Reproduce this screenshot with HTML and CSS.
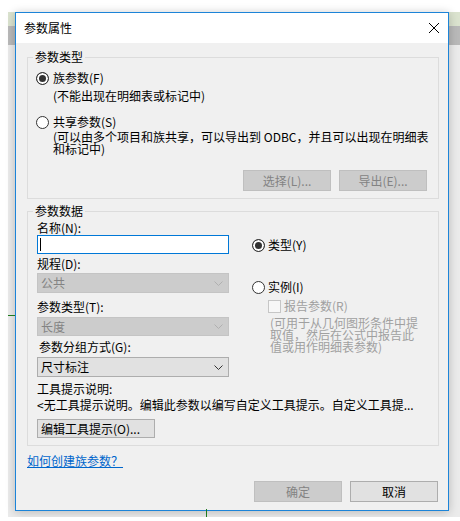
FILE: index.html
```html
<!DOCTYPE html>
<html lang="zh-CN">

<head>
  <meta charset="UTF-8" />
  <title>参数属性</title>
  <link rel="stylesheet" href="styles.css">
</head>

<body>
  <div class="screen">
    <span class="trace trace-h"></span>
    <span class="trace trace-v"></span>

    <div class="dialog">
      <div class="titlebar">
        <span class="title">参数属性</span>
        <svg class="close" width="10" height="10" viewBox="0 0 10 10">
          <path d="M0 0L10 10M10 0L0 10" stroke="#000" stroke-width="1" fill="none" />
        </svg>
      </div>

      <div class="dialog-body">
        <fieldset class="group">
          <legend>参数类型</legend>
          <div class="group-body group-type">
            <div class="option"><span class="radio checked"></span>族参数(F)</div>
            <div class="hint">(不能出现在明细表或标记中)</div>
            <div class="option option-shared"><span class="radio"></span>共享参数(S)</div>
            <div class="hint hint-wrap">(可以由多个项目和族共享，可以导出到 ODBC，并且可以出现在明细表<br>和标记中)</div>
            <div class="button-row">
              <button class="btn" disabled>选择(L)...</button>
              <button class="btn" disabled>导出(E)...</button>
            </div>
          </div>
        </fieldset>

        <fieldset class="group group-data">
          <legend>参数数据</legend>
          <div class="group-body">
            <div class="data-row">
              <div class="left-col">
                <div class="field-label first">名称(N):</div>
                <div class="textbox"><span class="caret"></span></div>

                <div class="field-label">规程(D):</div>
                <div class="combo disabled">
                  <span>公共</span>
                  <svg width="9" height="5" viewBox="0 0 9 5"><polyline points="0.5,0.5 4.5,4.5 8.5,0.5" fill="none" stroke="#b0b0b0" /></svg>
                </div>

                <div class="field-label">参数类型(T):</div>
                <div class="combo disabled short">
                  <span>长度</span>
                  <svg width="9" height="5" viewBox="0 0 9 5"><polyline points="0.5,0.5 4.5,4.5 8.5,0.5" fill="none" stroke="#b0b0b0" /></svg>
                </div>

                <div class="field-label indent">参数分组方式(G):</div>
                <div class="combo">
                  <span>尺寸标注</span>
                  <svg width="9" height="5" viewBox="0 0 9 5"><polyline points="0.5,0.5 4.5,4.5 8.5,0.5" fill="none" stroke="#333" /></svg>
                </div>
              </div>

              <div class="right-col">
                <div class="option"><span class="radio checked"></span>类型(Y)</div>
                <div class="option option-instance"><span class="radio"></span>实例(I)</div>
                <div class="check-row"><span class="checkbox"></span>报告参数(R)</div>
                <div class="note">(可用于从几何图形条件中提<br>取值，然后在公式中报告此<br>值或用作明细表参数)</div>
              </div>
            </div>

            <div class="tip-label">工具提示说明:</div>
            <div class="tip-text">&lt;无工具提示说明。编辑此参数以编写自定义工具提示。自定义工具提...</div>
            <button class="btn btn-tip">编辑工具提示(O)...</button>
          </div>
        </fieldset>

        <a class="help-link" href="#">如何创建族参数？</a>

        <div class="footer">
          <button class="btn" disabled>确定</button>
          <button class="btn">取消</button>
        </div>
      </div>
    </div>
  </div>
</body>

</html>
```

FILE: styles.css
```css
body {
  margin: 0;
  background: #fff;
  font-family: "Noto Sans CJK SC", "Microsoft YaHei", sans-serif;
  font-size: 12px;
  color: #000;
}

/* the app window behind the dialog */
.screen {
  position: relative;
  margin: 12px 0 0 8px;
  height: 505px;
  padding-left: 7px;
  background: linear-gradient(#dbe3cf 0 14px, #b9b9b9 14px 33px, #ebebeb 33px);
}

.trace {
  position: absolute;
  background: #1f7a1f;
}

.trace-h {
  left: 0;
  top: 303px;
  width: 7px;
  height: 1px;
}

.trace-v {
  left: 198px;
  top: 497px;
  width: 1px;
  height: 8px;
}

.dialog {
  width: 432px;
  border: 1px solid #1c84d8;
  background: #f0f0f0;
  box-shadow: 0 1px 9px rgba(0, 0, 0, 0.22);
}

.titlebar {
  height: 30px;
  background: #fff;
  display: flex;
  align-items: center;
  justify-content: space-between;
  padding: 0 9px 0 8px;
}

.title {
  line-height: 14px;
}

.dialog-body {
  padding: 7px 9px 8px 11px;
}

.group {
  margin: 0;
  padding: 0;
  border: 1px solid #dcdcdc;
  min-width: 0;
}

.group legend {
  margin-left: 5px;
  padding: 0 2px;
  line-height: 14px;
}

.group-data {
  margin-top: 5px;
}

.group-body {
  padding: 0 11px 7px 8px;
}

.group-data .group-body {
  padding-left: 9px;
}

.option {
  display: flex;
  align-items: center;
  gap: 4px;
  height: 14px;
  line-height: 14px;
  white-space: nowrap;
}

.group-type .option:first-child {
  margin-top: 7px;
}

.radio {
  width: 11px;
  height: 11px;
  border: 1px solid #333;
  border-radius: 50%;
  background: #fff;
  flex: none;
}

.radio.checked {
  background: #333;
  box-shadow: inset 0 0 0 2px #fff;
}

.hint {
  padding-left: 17px;
  margin-top: 4px;
  line-height: 14px;
  white-space: nowrap;
}

.option-shared {
  margin-top: 12px;
}

.hint-wrap {
  margin-top: 2px;
  line-height: 12px;
}

.button-row {
  margin-top: 15px;
  display: flex;
  justify-content: flex-end;
  gap: 8px;
}

.btn {
  height: 21px;
  width: 88px;
  margin: 0;
  padding: 0;
  font-family: inherit;
  font-size: 12px;
  line-height: 14px;
  color: #000;
  background: #e1e1e1;
  border: 1px solid #adadad;
  border-radius: 0;
}

.btn:disabled {
  color: #838383;
  background: #cccccc;
  border-color: #bfbfbf;
}

.data-row {
  display: flex;
  gap: 23px;
}

.left-col {
  width: 192px;
  flex: none;
}

.field-label {
  line-height: 14px;
  margin-top: 7px;
}

.field-label.first {
  margin-top: 3px;
}

.field-label.indent {
  margin-top: 4px;
  padding-left: 2px;
}

.left-col .combo.disabled {
  margin-top: 2px;
}

.left-col .field-label:nth-of-type(3) {
  margin-top: 3px;
}

.textbox {
  height: 19px;
  box-sizing: border-box;
  border: 1px solid #0078d7;
  background: #fff;
  display: flex;
  align-items: center;
  padding-left: 2px;
}

.caret {
  width: 1px;
  height: 13px;
  background: #000;
}

.combo {
  height: 20px;
  box-sizing: border-box;
  margin-top: 3px;
  display: flex;
  align-items: center;
  justify-content: space-between;
  padding: 0 5px 0 3px;
  background: #e1e1e1;
  border: 1px solid #adadad;
  line-height: 14px;
}

.combo.disabled {
  background: #cccccc;
  border-color: #c4c4c4;
  color: #838383;
}

.left-col .combo.short {
  margin-top: 3px;
  height: 19px;
}

.right-col {
  padding-top: 20px;
  flex: 1;
}

.right-col .option {
  gap: 3px;
}

.option-instance {
  margin-top: 28px;
}

.check-row {
  margin-top: 5px;
  padding-left: 16px;
  display: flex;
  align-items: center;
  gap: 3px;
  height: 14px;
  line-height: 14px;
  color: #a0a0a0;
}

.checkbox {
  width: 11px;
  height: 11px;
  border: 1px solid #c6c6c6;
  background: #f7f7f7;
  flex: none;
}

.note {
  margin-top: 4px;
  padding-left: 18px;
  line-height: 12px;
  color: #a0a0a0;
  white-space: nowrap;
}

.tip-label {
  margin-top: 5px;
  line-height: 14px;
}

.tip-text {
  margin-top: 2px;
  line-height: 14px;
  white-space: nowrap;
}

.btn-tip {
  display: block;
  margin-top: 7px;
  width: 118px;
  height: 19px;
  text-align: left;
  padding-left: 3px;
}

.help-link {
  display: inline-block;
  margin-top: 8px;
  line-height: 14px;
  color: #0066cc;
  text-decoration: underline;
}

.footer {
  margin-top: 12px;
  display: flex;
  justify-content: flex-end;
  gap: 8px;
  padding-right: 1px;
}
```
